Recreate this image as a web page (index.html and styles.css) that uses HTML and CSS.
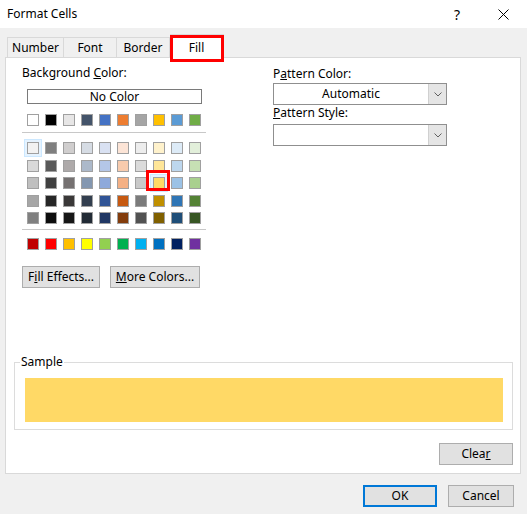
FILE: index.html
```html
<!DOCTYPE html>
<html lang="en">
<head>
    <meta charset="UTF-8">
    <title>Format Cells</title>
    <link rel="stylesheet" href="styles.css">
</head>
<body>
    <div class="dialog">
        <!-- title bar -->
        <div class="titlebar">
            <span class="title">Format Cells</span>
            <span class="cap-btn">?</span>
            <span class="cap-btn">
                <svg width="11" height="11" viewBox="0 0 11 11"><path d="M0.5 0.5 L10.5 10.5 M10.5 0.5 L0.5 10.5" stroke="#000" stroke-width="1" fill="none"/></svg>
            </span>
        </div>

        <!-- tabs -->
        <div class="tabs">
            <div class="tab tab-number">Number</div>
            <div class="tab tab-font">Font</div>
            <div class="tab tab-border">Border</div>
            <div class="tab active">Fill</div>
        </div>

        <div class="panel">
            <div class="panel-top">
                <div class="left-col">
                    <div class="label">Background <u>C</u>olor:</div>
                    <div class="no-color">No Color</div>

                    <div class="swatches row0">
                        <span class="sw" style="background:#ffffff"></span>
                        <span class="sw" style="background:#000000"></span>
                        <span class="sw" style="background:#e7e6e6"></span>
                        <span class="sw" style="background:#44546a"></span>
                        <span class="sw" style="background:#4472c4"></span>
                        <span class="sw" style="background:#ed7d31"></span>
                        <span class="sw" style="background:#a5a5a5"></span>
                        <span class="sw" style="background:#ffc000"></span>
                        <span class="sw" style="background:#5b9bd5"></span>
                        <span class="sw" style="background:#70ad47"></span>
                    </div>
                    <div class="sep"></div>

                    <div class="swatches theme">
                        <span class="sw hl" style="background:#f2f2f2"></span>
                        <span class="sw" style="background:#7f7f7f"></span>
                        <span class="sw" style="background:#d0cece"></span>
                        <span class="sw" style="background:#d6dce4"></span>
                        <span class="sw" style="background:#d9e1f2"></span>
                        <span class="sw" style="background:#fce4d6"></span>
                        <span class="sw" style="background:#ededed"></span>
                        <span class="sw" style="background:#fff2cc"></span>
                        <span class="sw" style="background:#ddebf7"></span>
                        <span class="sw" style="background:#e2efda"></span>

                        <span class="sw" style="background:#d9d9d9"></span>
                        <span class="sw" style="background:#595959"></span>
                        <span class="sw" style="background:#aeaaaa"></span>
                        <span class="sw" style="background:#acb9ca"></span>
                        <span class="sw" style="background:#b4c6e7"></span>
                        <span class="sw" style="background:#f8cbad"></span>
                        <span class="sw" style="background:#dbdbdb"></span>
                        <span class="sw" style="background:#ffe699"></span>
                        <span class="sw" style="background:#bdd7ee"></span>
                        <span class="sw" style="background:#c6e0b4"></span>

                        <span class="sw" style="background:#bfbfbf"></span>
                        <span class="sw" style="background:#404040"></span>
                        <span class="sw" style="background:#757171"></span>
                        <span class="sw" style="background:#8497b0"></span>
                        <span class="sw" style="background:#8ea9db"></span>
                        <span class="sw" style="background:#f4b084"></span>
                        <span class="sw" style="background:#c9c9c9"></span>
                        <span class="sw hl picked" style="background:#ffd966"></span>
                        <span class="sw" style="background:#9bc2e6"></span>
                        <span class="sw" style="background:#a9d08e"></span>

                        <span class="sw" style="background:#a6a6a6"></span>
                        <span class="sw" style="background:#262626"></span>
                        <span class="sw" style="background:#3a3838"></span>
                        <span class="sw" style="background:#333f4f"></span>
                        <span class="sw" style="background:#305496"></span>
                        <span class="sw" style="background:#c65911"></span>
                        <span class="sw" style="background:#7b7b7b"></span>
                        <span class="sw" style="background:#bf8f00"></span>
                        <span class="sw" style="background:#2f75b5"></span>
                        <span class="sw" style="background:#548235"></span>

                        <span class="sw" style="background:#808080"></span>
                        <span class="sw" style="background:#0d0d0d"></span>
                        <span class="sw" style="background:#161616"></span>
                        <span class="sw" style="background:#222b35"></span>
                        <span class="sw" style="background:#203764"></span>
                        <span class="sw" style="background:#833c0c"></span>
                        <span class="sw" style="background:#525252"></span>
                        <span class="sw" style="background:#806000"></span>
                        <span class="sw" style="background:#1f4e78"></span>
                        <span class="sw" style="background:#375623"></span>
                    </div>
                    <div class="sep sep2"></div>

                    <div class="swatches standard">
                        <span class="sw" style="background:#c00000"></span>
                        <span class="sw" style="background:#ff0000"></span>
                        <span class="sw" style="background:#ffc000"></span>
                        <span class="sw" style="background:#ffff00"></span>
                        <span class="sw" style="background:#92d050"></span>
                        <span class="sw" style="background:#00b050"></span>
                        <span class="sw" style="background:#00b0f0"></span>
                        <span class="sw" style="background:#0070c0"></span>
                        <span class="sw" style="background:#002060"></span>
                        <span class="sw" style="background:#7030a0"></span>
                    </div>

                    <div class="btn-row">
                        <div class="btn btn-fill">F<u>i</u>ll Effects...</div>
                        <div class="btn btn-more"><u>M</u>ore Colors...</div>
                    </div>
                </div>

                <div class="right-col">
                    <div class="label label-color">P<u>a</u>ttern Color:</div>
                    <div class="combo">
                        <span class="combo-value">Automatic</span>
                        <span class="combo-arrow">
                            <svg width="8" height="5" viewBox="0 0 8 5"><path d="M0.5 0.5 L4 4 L7.5 0.5" stroke="#606060" stroke-width="1" fill="none"/></svg>
                        </span>
                    </div>
                    <div class="label"><u>P</u>attern Style:</div>
                    <div class="combo combo-style">
                        <span class="combo-value"></span>
                        <span class="combo-arrow">
                            <svg width="8" height="5" viewBox="0 0 8 5"><path d="M0.5 0.5 L4 4 L7.5 0.5" stroke="#606060" stroke-width="1" fill="none"/></svg>
                        </span>
                    </div>
                </div>
            </div>

            <fieldset class="sample">
                <legend>Sample</legend>
                <div class="sample-fill"></div>
            </fieldset>

            <div class="clear-row">
                <div class="btn btn-clear">Clea<u>r</u></div>
            </div>
        </div>

        <div class="footer">
            <div class="btn btn-ok">OK</div>
            <div class="btn btn-cancel">Cancel</div>
        </div>
    </div>
</body>
</html>
```

FILE: styles.css
```css
/* dialog base */
body {
    margin: 0;
    font-family: "Noto Sans", "Segoe UI", sans-serif;
    font-size: 12px;
    color: #000;
}

.dialog {
    width: 527px;
    height: 514px;
    background-color: #f0f0f0;
    display: flex;
    flex-direction: column;
}

/* title bar */
.titlebar {
    height: 28px;
    background-color: #fff;
    display: flex;
    align-items: center;
    padding-left: 7px;
    padding-right: 1px;
}

.title {
    flex: 1;
    line-height: 16px;
}

.cap-btn {
    width: 46px;
    height: 28px;
    display: flex;
    align-items: center;
    justify-content: center;
    font-size: 14px;
}

/* tabs */
.tabs {
    display: flex;
    align-items: flex-end;
    height: 23px;
    margin-top: 6px;
    padding-left: 7px;
    position: relative;
    z-index: 1;
}

.tab {
    box-sizing: border-box;
    height: 20px;
    border: 1px solid #d9d9d9;
    border-bottom: none;
    border-right: none;
    background-color: #f0f0f0;
    display: flex;
    align-items: center;
    justify-content: center;
    line-height: 16px;
}

.tab-number { width: 56px; }
.tab-font { width: 53px; }
.tab-border { width: 54px; border-right: 1px solid #d9d9d9; }

.tab.active {
    width: 54px;
    height: 24px;
    margin-bottom: -1px;
    padding-top: 2px;
    background-color: #fff;
    border-right: 1px solid #d9d9d9;
    border-left: none;
    position: relative;
}

/* red marker around the selected tab */
.tab.active::after {
    content: "";
    position: absolute;
    top: 0;
    left: 0;
    width: 54px;
    height: 27px;
    box-sizing: border-box;
    border: 3px solid #ff0000;
}

/* page panel */
.panel {
    box-sizing: border-box;
    width: 516px;
    height: 417px;
    margin-left: 5px;
    border: 1px solid #d9d9d9;
    background-color: #fff;
    display: flex;
    flex-direction: column;
}

.panel-top {
    display: flex;
}

.left-col {
    box-sizing: border-box;
    width: 267px;
    padding-left: 16px;
}

.right-col {
    width: 174px;
}

.label {
    line-height: 16px;
}

.left-col .label {
    margin-top: 7px;
}

.label-color {
    margin-top: 8px;
}

.no-color {
    box-sizing: border-box;
    width: 175px;
    height: 15px;
    margin: 8px 0 0 5px;
    border: 1px solid #7a7a7a;
    text-align: center;
    line-height: 13px;
}

/* colour grids */
.swatches {
    display: grid;
    grid-template-columns: repeat(10, 12px);
    column-gap: 6px;
    margin-left: 5px;
}

.row0 { margin-top: 10px; }
.theme { margin-top: 9px; row-gap: 5.5px; }
.standard { margin-top: 8px; }

.sw {
    box-sizing: border-box;
    width: 12px;
    height: 12px;
    border: 1px solid #a0a0a0;
}

.sw.hl {
    box-shadow: 0 0 0 2px #e5f3ff, 0 0 0 3px #cce8ff;
}

.sw.picked {
    position: relative;
}

.sw.picked::after {
    content: "";
    position: absolute;
    left: -8px;
    top: -8px;
    width: 24px;
    height: 21px;
    box-sizing: border-box;
    border: 3px solid #ff0000;
}

.sep {
    width: 184px;
    height: 1px;
    background-color: #c8c8c8;
    margin-top: 6px;
}

.sep2 { margin-top: 5px; }

/* buttons */
.btn {
    box-sizing: border-box;
    height: 22px;
    border: 1px solid #adadad;
    background-color: #e1e1e1;
    display: flex;
    align-items: center;
    justify-content: center;
    line-height: 16px;
}

.btn-row {
    display: flex;
    gap: 10px;
    margin-top: 16px;
}

.btn-fill { width: 78px; }
.btn-more { width: 90px; }

/* combo boxes */
.combo {
    box-sizing: border-box;
    display: flex;
    height: 22px;
    margin-top: 1px;
    border: 1px solid #8f8f8f;
}

.combo-style { margin-top: 3px; }

.combo-value {
    flex: 1;
    text-align: center;
    line-height: 20px;
}

.combo-arrow {
    width: 17px;
    background-color: #e5e5e5;
    border-left: 1px solid #d0d0d0;
    display: flex;
    align-items: center;
    justify-content: center;
}

/* sample */
.sample {
    margin: auto 7px 0 8px;
    padding: 8px 9px 7px 10px;
    min-width: 0;
    border: 1px solid #dcdcdc;
}

.sample legend {
    margin-left: -5px;
    padding: 0 1px;
    line-height: 16px;
}

.sample-fill {
    height: 44px;
    background-color: #ffd966;
}

.clear-row {
    display: flex;
    justify-content: flex-end;
    margin: 13px 7px 8px 0;
}

.btn-clear { width: 74px; }

/* footer */
.footer {
    display: flex;
    justify-content: flex-end;
    gap: 11px;
    margin-top: 11px;
    padding-right: 13px;
}

.btn-ok {
    width: 74px;
    border: 2px solid #0078d7;
}

.btn-cancel { width: 66px; }
```
